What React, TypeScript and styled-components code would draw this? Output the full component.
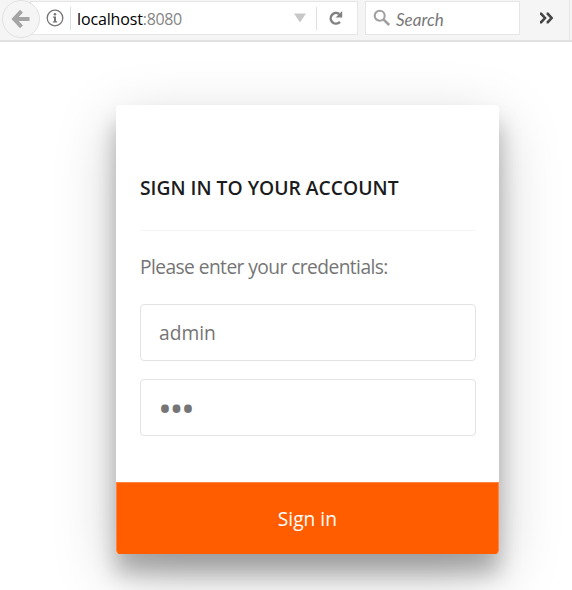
import React from "react";
import styled, { createGlobalStyle } from "styled-components";

const GlobalStyle = createGlobalStyle`
  * { box-sizing: border-box; }
  body { margin: 0; background: #fff; overflow: hidden; font-family: "Open Sans", "Noto Sans", sans-serif; }
`;

const Page = styled.div`
  width: 572px;
  height: 590px;
  overflow: hidden;
`;

const Toolbar = styled.header`
  display: flex;
  align-items: flex-start;
  height: 42px;
  padding-top: 1px;
  background: #f5f5f5;
  border-bottom: 2px solid #e1e1e1;
`;

const BackButton = styled.button`
  display: grid;
  place-items: center;
  z-index: 1;
  width: 38px;
  height: 38px;
  margin: -1px -10px 0 2px;
  padding: 0;
  border: 1px solid #e2e2e2;
  border-radius: 50%;
  background: #f5f5f5;
`;

const AddressBar = styled.div`
  display: flex;
  align-items: center;
  width: 328px;
  height: 34px;
  padding-left: 15px;
  background: #fff;
  border: 1px solid #e6e6e6;
`;

const Divider = styled.span<{ $gap: number }>`
  width: 1px;
  height: 23px;
  margin-left: ${(p) => p.$gap}px;
  background: #dedede;
`;

const Address = styled.span`
  flex: 1;
  margin: 2px 0 0 6px;
  font-size: 16px;
  line-height: 24px;
  letter-spacing: -0.4px;
  color: #858585;
`;

const Host = styled.span`
  color: #000;
  letter-spacing: -0.13px;
`;

const Reload = styled.span`
  display: flex;
  width: 40px;
  padding-left: 11px;
`;

const SearchBox = styled.div`
  display: flex;
  align-items: center;
  width: 155px;
  height: 34px;
  margin-left: 7px;
  padding-left: 7px;
  background: #fff;
  border: 1px solid #e6e6e6;
`;

const SearchHint = styled.span`
  margin: 3px 0 0 5px;
  font: italic 17px/24px Lato, "Open Sans", sans-serif;
  color: #777;
`;

const Overflow = styled.span`
  display: flex;
  flex: 1;
  height: 40px;
  padding: 11px 0 0 19px;
  margin: -1px 2px 0 0;
  border-right: 1px solid #e7e7e7;
`;

const Card = styled.form`
  display: flex;
  flex-direction: column;
  width: 383px;
  height: 449px;
  margin: 63px 0 0 116.4px;
  border-radius: 4px;
  background: #fff;
  box-shadow: 0 19px 22px rgba(0, 0, 0, 0.26), 0 20px 62px rgba(0, 0, 0, 0.21);
`;

const CardBody = styled.div`
  flex: 1;
  padding: 68px 23.4px 0 23.6px;
`;

const Title = styled.h1`
  height: 58px;
  margin: 0;
  border-bottom: 1px solid #f4f4f4;
  font-size: 19.3px;
  font-weight: 600;
  line-height: 30px;
  letter-spacing: 0;
  white-space: nowrap;
  color: #1b1c1d;
`;

const Prompt = styled.p`
  margin: 21px 0 22px;
  font-size: 19.2px;
  line-height: 30px;
  letter-spacing: -0.57px;
  white-space: nowrap;
  color: #757575;
`;

const Field = styled.input`
  display: block;
  width: 100%;
  height: 56.5px;
  margin: 0 0 18.5px;
  padding: 1px 18px 0;
  border: 1px solid #e3e3e3;
  border-radius: 4px;
  outline: 0;
  background: #fff;
  font: 19.2px "Open Sans", sans-serif;
  color: #757575;
`;

const PasswordField = styled(Field)`
  padding: 1px 17px 0;
  font-size: 37px;
  letter-spacing: -2.4px;
`;

const SubmitButton = styled.button`
  height: 72px;
  padding: 1px 1px 0 0;
  border: 1px solid #ff8540;
  border-bottom-color: #ff5d00;
  border-radius: 0 0 4px 4px;
  background: #ff5d00;
  font: 19.2px "Open Sans", sans-serif;
  letter-spacing: 0;
  color: #fff;
`;

export default function App() {
  return (
    <Page>
      <GlobalStyle />
      <Toolbar>
        <BackButton type="button" aria-label="Back">
          <svg width="20" height="20" viewBox="0 0 20 20" fill="none" stroke="#a5a5a5" strokeWidth="4">
            <path d="M10.5 2.2 3.2 10l7.3 7.8M4 10h14.5" />
          </svg>
        </BackButton>
        <AddressBar>
          <svg width="18" height="18" viewBox="0 0 18 18">
            <circle cx="9" cy="9" r="7.8" fill="none" stroke="#757575" strokeWidth="1.3" />
            <circle cx="9" cy="5.2" r="1.3" fill="#757575" />
            <path d="M7 7.5h3v4.7h1.2v1.2H6.9v-1.2H8V8.7H7z" fill="#757575" />
          </svg>
          <Divider $gap={6} />
          <Address><Host>localhost</Host>:8080</Address>
          <svg width="12" height="10" viewBox="0 0 12 10">
            <path d="M0 .5h12L6 9.5z" fill="#c8c8c8" />
          </svg>
          <Divider $gap={10} />
          <Reload>
            <svg width="16" height="16" viewBox="0 0 16 16">
              <path d="M11.9 11.9A5.3 5.3 0 1 1 11.2 4.1" fill="none" stroke="#808080" strokeWidth="2.5" />
              <path d="M14.2 1v6.6H7.6z" fill="#808080" />
            </svg>
          </Reload>
        </AddressBar>
        <SearchBox>
          <svg width="18" height="18" viewBox="0 0 18 18" fill="none" stroke="#a0a0a0">
            <circle cx="6.7" cy="6.7" r="5" strokeWidth="2.1" />
            <path d="m10.4 10.4 5.8 5.6" strokeWidth="2.7" />
          </svg>
          <SearchHint>Search</SearchHint>
        </SearchBox>
        <Overflow>
          <svg width="15" height="14" viewBox="0 0 15 14" fill="none" stroke="#454545" strokeWidth="2.6">
            <path d="M1 2.8h1.2L6 7l-3.8 4.2H1M7.6 2.8h1.2L12.6 7l-3.8 4.2H7.6" />
          </svg>
        </Overflow>
      </Toolbar>
      <Card>
        <CardBody>
          <Title>SIGN IN TO YOUR ACCOUNT</Title>
          <Prompt>Please enter your credentials:</Prompt>
          <Field type="text" defaultValue="admin" aria-label="Username" />
          <PasswordField type="password" defaultValue="•••" aria-label="Password" />
        </CardBody>
        <SubmitButton type="button">Sign in</SubmitButton>
      </Card>
    </Page>
  );
}
